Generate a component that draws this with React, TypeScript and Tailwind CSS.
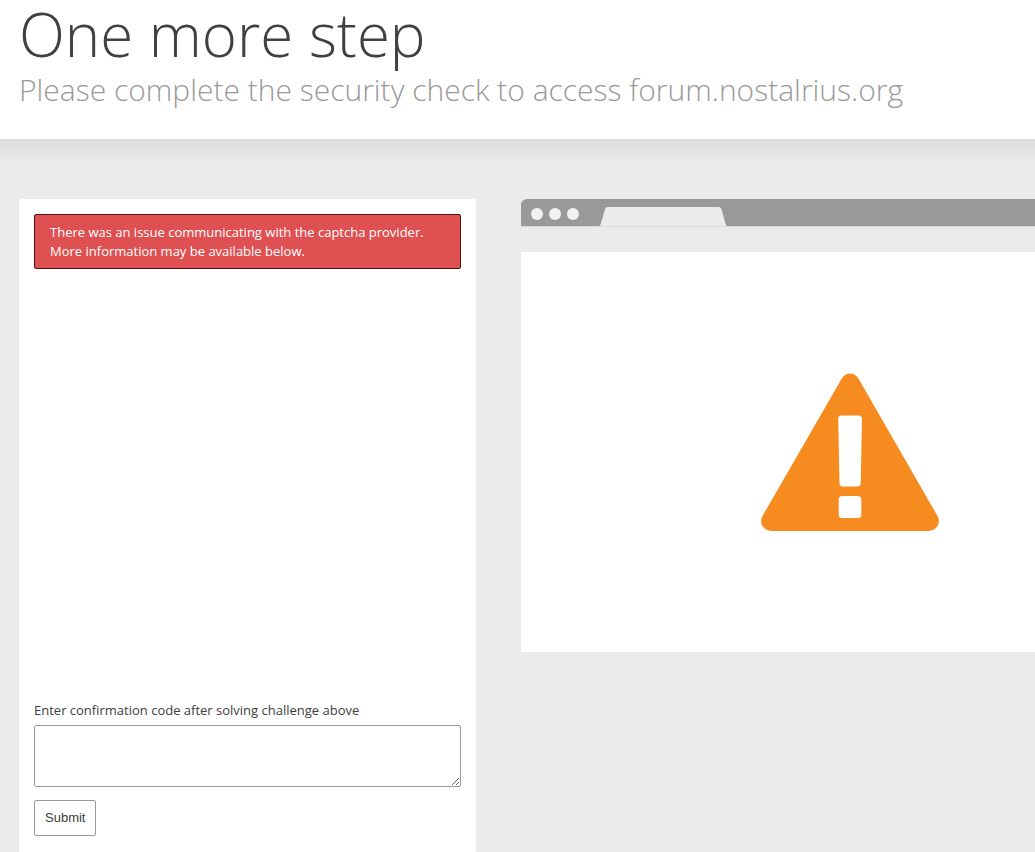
function Header() {
  return (
    <header className="bg-white px-[19px] pb-7">
      <h1 className="font-light text-[60px] leading-[68px] text-[#404040]">One more step</h1>
      <h2 className="font-light text-[30px] leading-[43px] text-[#999]">
        Please complete the security check to access forum.nostalrius.org
      </h2>
    </header>
  );
}

function CaptchaForm() {
  return (
    <form
      className="flex flex-col rounded-t-[3px] bg-white p-[15px]"
      onSubmit={(event) => event.preventDefault()}
    >
      <p
        role="alert"
        className="rounded-[2px] border border-[#521010] bg-[#df5052] px-[15px] pt-2 pb-[7px] text-[13px] leading-[19px] text-white"
      >
        There was an issue communicating with the captcha provider. More information may be
        available below.
      </p>
      <div className="h-[432px]" />
      <label htmlFor="code" className="text-[13px] leading-[19px]">
        Enter confirmation code after solving challenge above
      </label>
      <textarea
        id="code"
        className="mt-[5px] block h-[62px] w-full rounded-[2px] border border-[#999] bg-white p-2 text-[13px] outline-none"
      />
      <button
        type="submit"
        className="mt-[13px] h-9 self-start rounded-[2px] border border-[#999] bg-white px-[10px] font-['Liberation_Sans',Arial,sans-serif] text-[13px]"
      >
        Submit
      </button>
    </form>
  );
}

function BrowserIllustration() {
  return (
    <div className="flex flex-col gap-[25px]" aria-hidden="true">
      <div className="flex h-7 items-end rounded-t-[6px] border-b border-[#d8d8d8] bg-[#999] pl-[10px]">
        <div className="flex gap-[6px] pb-[6px]">
          <span className="size-[12px] rounded-full bg-[#f1f1f1]" />
          <span className="size-[12px] rounded-full bg-[#f1f1f1]" />
          <span className="size-[12px] rounded-full bg-[#f1f1f1]" />
        </div>
        <svg className="ml-[20px]" width="128" height="19" viewBox="0 0 128 19">
          <path
            d="M0 19C1.2 18.6 1.5 17.8 1.8 16.8L5.8 3C6.3 1 7 0 8.8 0H119.5C121.5 0 122.1 1 122.7 3L126.5 16.8C126.8 17.8 127.2 18.6 128 19Z"
            fill="#ebebeb"
          />
        </svg>
      </div>
      <div className="flex h-[400px] items-center justify-center bg-white">
        <svg width="178" height="158" viewBox="0 0 178 158">
          <path
            d="M80.5 6C84.5-1.3 93.5-1.3 97.7 6L176.5 143C180.5 150 175.5 158 167 158H11C2.5 158-2.5 150 1.5 143Z"
            fill="#f68b1f"
          />
          <path
            d="M80.5 42.5H97.5Q101 42.5 101 46L99.7 110Q99.6 113.5 96.5 113.5H81.8Q78.6 113.5 78.5 110L77.2 46Q77.2 42.5 80.5 42.5Z"
            fill="#fff"
          />
          <rect x="77.7" y="123" width="22.6" height="22" rx="3.5" fill="#fff" />
        </svg>
      </div>
    </div>
  );
}

export default function App() {
  return (
    <div className="flex min-h-screen flex-col bg-[#ebebeb] font-['Open_Sans',sans-serif] text-[#404040]">
      <Header />
      <main className="grid flex-1 grid-cols-[457px_minmax(658px,1fr)] gap-x-[45px] overflow-x-clip bg-linear-to-b from-[#dcdcdc] to-[#ebebeb] to-[24px] pt-[60px] pl-[19px]">
        <CaptchaForm />
        <BrowserIllustration />
      </main>
    </div>
  );
}
